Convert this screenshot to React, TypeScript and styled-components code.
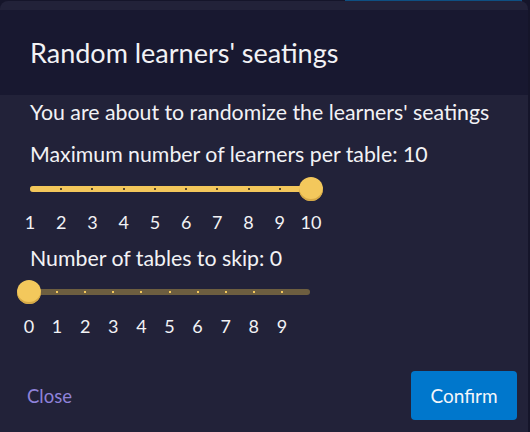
import React from "react";
import styled, { createGlobalStyle } from "styled-components";

const GlobalStyle = createGlobalStyle`
  html, body {
    margin: 0;
    padding: 0;
    background: #15152a;
  }
  body {
    font-family: "Lato", "Noto Sans", sans-serif;
    color: #f2f2f5;
    overflow: hidden;
  }
`;

const Backdrop = styled.div`
  width: 530px;
  height: 432px;
  position: relative;
  background:
    linear-gradient(to right, transparent 345px, #0e4f82 345px, #0e4f82 522px, transparent 522px) top / 100% 2px no-repeat,
    #15152a;
`;

const Dialog = styled.div`
  position: absolute;
  top: 1px;
  left: 0;
  width: 528px;
  height: 440px;
  border-radius: 8px;
  background: #222239;
  padding-top: 9px;
  box-sizing: border-box;
  display: flex;
  flex-direction: column;
`;

const Header = styled.div`
  height: 85px;
  background: #181830;
  display: flex;
  align-items: center;
  padding: 0 30px 0;
`;

const Title = styled.h2`
  margin: 0;
  font-size: 27px;
  font-weight: 400;
`;

const Body = styled.div`
  padding: 0 30px;
  display: flex;
  flex-direction: column;
`;

const Text = styled.p<{ $top: number }>`
  margin: ${(p) => p.$top}px 0 0;
  font-size: 21.3px;
  line-height: 24px;
`;

const SliderBox = styled.div<{ $top: number; $shift: number }>`
  position: relative;
  width: 281px;
  height: 24px;
  margin: ${(p) => p.$top}px 0 0 ${(p) => p.$shift}px;
`;

const Track = styled.div<{ $active: boolean }>`
  position: absolute;
  left: 0;
  right: 0;
  top: 9px;
  height: 6px;
  border-radius: 3px;
  background: ${(p) => (p.$active ? "#f3c75b" : "#6d5e40")};
`;

const Dot = styled.span<{ $active: boolean }>`
  position: absolute;
  top: 11px;
  width: 2px;
  height: 2px;
  margin-left: -1px;
  background: ${(p) => (p.$active ? "#5b4b2b" : "#f3c75b")};
`;

const Thumb = styled.span`
  position: absolute;
  top: 0;
  width: 24px;
  height: 24px;
  margin-left: -12px;
  border-radius: 50%;
  background: #f3c85c;
  box-shadow: inset 0 -2px 0 #d6a946;
`;

const Labels = styled.div<{ $top: number; $shift: number }>`
  position: relative;
  width: 281px;
  height: 20px;
  margin: ${(p) => p.$top}px 0 0 ${(p) => p.$shift}px;
`;

const Label = styled.span`
  position: absolute;
  top: 0;
  transform: translateX(-50%);
  font-size: 18px;
  line-height: 20px;
  color: #f2f2f5;
`;

const Footer = styled.div`
  margin-top: 35px;
  padding: 0 11px 0 27px;
  display: flex;
  align-items: center;
  justify-content: space-between;
`;

const CloseButton = styled.button`
  border: none;
  background: none;
  padding: 0;
  font-family: inherit;
  font-size: 18.5px;
  color: #8f82da;
  cursor: pointer;
`;

const ConfirmButton = styled.button`
  width: 106px;
  height: 49px;
  border: none;
  border-radius: 4px;
  background: #0077cc;
  color: #f4f6fa;
  font-family: inherit;
  font-size: 19px;
  cursor: pointer;
`;

type SliderProps = {
  min: number;
  max: number;
  value: number;
  labels: number[];
  top: number;
  labelTop: number;
  shift: number;
};

const Slider = ({ min, max, value, labels, top, labelTop, shift }: SliderProps) => {
  const pct = (v: number) => ((v - min) / (max - min)) * 100;
  const dots = [];
  for (let v = min + 1; v < max; v++) dots.push(v);
  return (
    <>
      <SliderBox $top={top} $shift={shift}>
        <Track $active={false} />
        <Track $active style={{ right: `${100 - pct(value)}%` }} />
        {dots.map((v) => (
          <Dot key={v} $active={v <= value} style={{ left: `${pct(v)}%` }} />
        ))}
        <Thumb style={{ left: `${pct(value)}%` }} />
      </SliderBox>
      <Labels $top={labelTop} $shift={shift}>
        {labels.map((v) => (
          <Label key={v} style={{ left: `${pct(v)}%` }}>
            {v}
          </Label>
        ))}
      </Labels>
    </>
  );
};

export default function App() {
  return (
    <>
      <GlobalStyle />
      <Backdrop>
        <Dialog>
          <Header>
            <Title>Random learners' seatings</Title>
          </Header>
          <Body>
            <Text $top={5}>You are about to randomize the learners' seatings</Text>
            <Text $top={18}>Maximum number of learners per table: 10</Text>
            <Slider
              min={1}
              max={10}
              value={10}
              labels={[1, 2, 3, 4, 5, 6, 7, 8, 9, 10]}
              top={11}
              labelTop={11}
              shift={0}
            />
            <Text $top={14}>Number of tables to skip: 0</Text>
            <Slider
              min={0}
              max={10}
              value={0}
              labels={[0, 1, 2, 3, 4, 5, 6, 7, 8, 9]}
              top={10}
              labelTop={12}
              shift={-1}
            />
          </Body>
          <Footer>
            <CloseButton>Close</CloseButton>
            <ConfirmButton>Confirm</ConfirmButton>
          </Footer>
        </Dialog>
      </Backdrop>
    </>
  );
}
